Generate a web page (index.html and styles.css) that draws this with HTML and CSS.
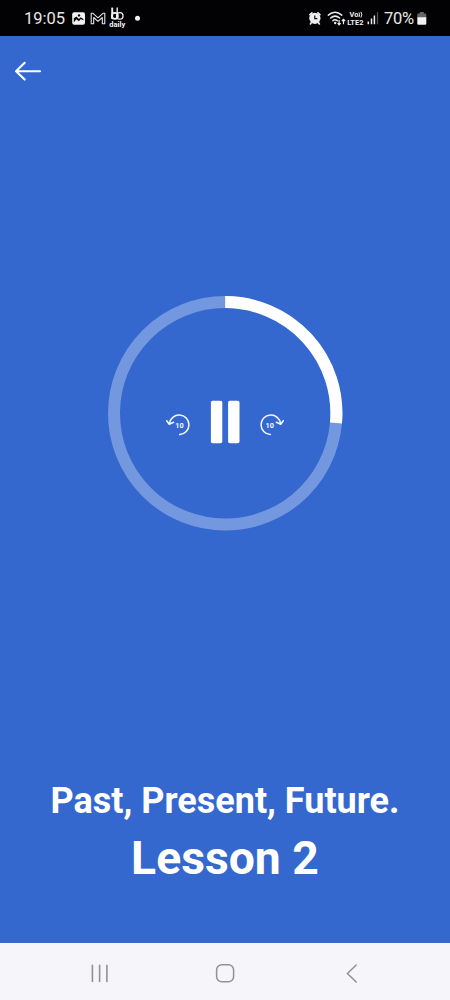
FILE: index.html
```html
<!DOCTYPE html>
<html lang="en">
<head>
<meta charset="utf-8">
<title>Lesson 2</title>
<link rel="stylesheet" href="styles.css">
</head>
<body>
<div class="screen">
  <header class="status">
    <div class="status-left">
      <span class="clock">19:05</span>
      <svg class="notifications" width="75" height="36" viewBox="70 0 75 36">
        <rect x="72.2" y="12.2" width="12.8" height="12.6" rx="2" fill="#f2f2f2"/>
        <path d="M73.8 22.4v-4.2l2.6-1.7 2.6 2.5 1.6-1.7 2.8 1.7v1.6l-2.5-1.5-2 2.1-2.5-2z" fill="#08080a"/>
        <circle cx="79" cy="15.4" r="1.2" fill="#08080a"/>
        <path d="M91.2 23.7V13.2h1.6l5.2 4.6 5.2-4.6h1.6v10.5h-2.5v-6.2L98 21.4l-4.3-3.9v6.2z" fill="none" stroke="#e6e6e6" stroke-width="1.1" stroke-linejoin="round"/>
        <g fill="none" stroke="#f2f2f2">
          <path d="M112.2 7.6v11.4" stroke-width="1.9"/>
          <circle cx="114.9" cy="15.9" r="3" stroke-width="1.7"/>
          <path d="M117.2 7.6v8.3" stroke-width="1.4"/>
          <circle cx="119.8" cy="15.9" r="3.2" stroke-width="1.3"/>
        </g>
        <text x="109.2" y="27.2" class="badge-text" textLength="16" lengthAdjust="spacingAndGlyphs">daily</text>
        <circle cx="137.5" cy="18.3" r="2.5" fill="#f2f2f2"/>
      </svg>
    </div>
    <div class="status-right">
      <svg width="76" height="36" viewBox="306 0 76 36">
        <g fill="none" stroke="#ededed" stroke-linecap="round">
          <path d="M309.9 14.6l2-1.8M319.9 14.6l-2-1.8M311.4 22.6l-1 1.3M318.4 22.6l1 1.3" stroke-width="1.7"/>
        </g>
        <circle cx="314.9" cy="18.3" r="5.6" fill="#ededed"/>
        <path d="M314.8 15.4v3.2h2.5" fill="none" stroke="#08080a" stroke-width="1.2"/>
        <g fill="none" stroke="#ededed" stroke-width="1.5" stroke-linecap="round">
          <path d="M328.3 15.1q6.7-5.6 13.5 0M330.6 18q4.5-3.8 9 0M332.9 20.7q2.2-1.7 4.3 0"/>
        </g>
        <circle cx="335.2" cy="23" r="1.2" fill="#ededed"/>
        <path d="M339.1 20v4.5M337.6 23.2l1.5 1.6 1.5-1.6M343.5 24.2v-4.7M341.9 21l1.6-1.6 1.6 1.6" fill="none" stroke="#ededed" stroke-width="1.2"/>
        <text x="349.5" y="17.4" class="network-text" textLength="8.8" lengthAdjust="spacingAndGlyphs">Vo</text>
        <path d="M359 12.5q1.3 2.3 0 4.5M360.9 11.9q1.8 2.8 0 5.6" fill="none" stroke="#ededed" stroke-width="1"/>
        <text x="347.2" y="24.8" class="network-text" textLength="16.2" lengthAdjust="spacingAndGlyphs">LTE2</text>
        <path d="M368.3 21.5v2.8M371.5 18.5v5.8M374.4 15.5v8.8" stroke="#ededed" stroke-width="1.5"/>
        <path d="M377.5 12.2v12.1" stroke="#555" stroke-width="1.3"/>
      </svg>
      <span class="percent">70%</span>
      <svg width="10" height="36" viewBox="417 0 10 36">
        <path d="M419.8 12h4v1.6h1.3q1.2 0 1.2 1.2V18h-9v-3.2q0-1.2 1.2-1.2h1.3z" fill="#666"/>
        <path d="M417.3 17.3h9v6.3q0 1.2-1.2 1.2h-6.6q-1.2 0-1.2-1.2z" fill="#f2f2f2"/>
      </svg>
    </div>
  </header>
  <main class="lesson">
    <button class="back" aria-label="Back">
      <svg width="28" height="22" viewBox="0 0 28 22"><path d="M26 11.2H2M10.7 2.8L2 11.2l8.7 8.4" fill="none" stroke="#fff" stroke-width="2.1" stroke-linecap="round" stroke-linejoin="round"/></svg>
    </button>
    <svg class="player" width="236" height="236" viewBox="107 295 236 236">
      <circle cx="225.2" cy="413.3" r="111.2" fill="none" stroke="#7398df" stroke-width="12"/>
      <path d="M225.2 302.1A111.2 111.2 0 0 1 336 422.9" fill="none" stroke="#fff" stroke-width="12"/>
      <rect x="210.9" y="400.8" width="11.4" height="42.4" rx="1.8" fill="#fff"/>
      <rect x="228.1" y="400.8" width="11.4" height="42.4" rx="1.8" fill="#fff"/>
      <g fill="none" stroke="#f3f8ff" stroke-width="1.5" stroke-linecap="round" stroke-linejoin="round">
        <path d="M169.4 423.7A9.8 9.8 0 1 1 179.7 434.6M166.7 420.7l2.5 3.5 4.4-1.9"/>
        <path d="M280.6 423.7A9.8 9.8 0 1 0 270.3 434.6M283.3 420.7l-2.5 3.5-4.4-1.9"/>
      </g>
      <text x="179.5" y="427.8" class="skip-text">10</text>
      <text x="269.8" y="427.8" class="skip-text">10</text>
    </svg>
    <div class="titles">
      <h1 class="course">Past, Present, Future.</h1>
      <h2 class="number">Lesson 2</h2>
    </div>
  </main>
  <nav class="system-nav">
    <svg width="20" height="20" viewBox="0 0 20 20"><path d="M3.4 2.4v16M10.6 2.4v16M17.9 2.4v16" stroke="#929195" stroke-width="1.6" stroke-linecap="round"/></svg>
    <svg width="20" height="20" viewBox="0 0 20 20"><rect x="1.6" y="1.8" width="17" height="17" rx="5.2" fill="none" stroke="#929195" stroke-width="1.5"/></svg>
    <svg width="20" height="20" viewBox="0 0 20 20"><path d="M15.2 2L6.4 10.5l8.8 8.5" fill="none" stroke="#929195" stroke-width="1.5" stroke-linecap="round"/></svg>
  </nav>
</div>
</body>
</html>
```
FILE: styles.css
```css
* { box-sizing: border-box; }
body { margin: 0; font-family: Roboto, "Liberation Sans", sans-serif; }
.screen { display: flex; flex-direction: column; width: 450px; height: 1000px; background: #3568ce; }
.status { display: flex; justify-content: space-between; height: 36px; padding: 0 23px 0 24px; background: #020204; color: #e8e8e8; }
.status-left, .status-right { display: flex; align-items: center; }
.clock { width: 46px; padding-top: 2px; font-size: 16.5px; line-height: 34px; }
.percent { width: 35px; padding: 2px 0 0 2px; font-size: 16.5px; line-height: 34px; letter-spacing: -.3px; }
.badge-text { font-size: 8px; font-weight: 700; fill: #f2f2f2; }
.network-text { font-size: 8px; font-weight: 700; fill: #ededed; }
.lesson { display: flex; flex: 1; flex-direction: column; align-items: center; color: #fff; }
.back { align-self: flex-start; height: 22px; margin: 24px 0 0 14px; padding: 0; border: 0; background: none; }
.back svg { display: block; }
.player { margin-top: 213px; }
.skip-text { font-size: 7.3px; font-weight: 700; fill: #f3f8ff; text-anchor: middle; }
.titles { margin-top: 248px; text-align: center; }
.course, .number { margin: 0; font-weight: 700; white-space: nowrap; }
.course { font-size: 36px; line-height: 44px; }
.number { margin-top: 7px; font-size: 46.3px; line-height: 56px; }
.system-nav { display: flex; justify-content: space-between; align-items: center; height: 56.6px; padding: 4px 89px 2px; background: #f6f5f9; }
```
